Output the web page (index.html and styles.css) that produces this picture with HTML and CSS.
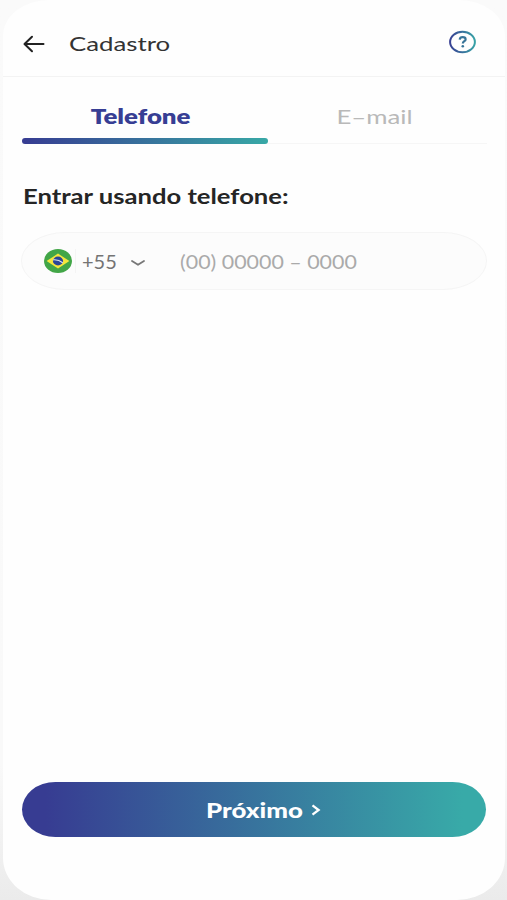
FILE: index.html
```html
<!DOCTYPE html>
<html lang="pt-BR">
<head>
    <meta charset="UTF-8">
    <meta name="viewport" content="width=device-width, initial-scale=1.0">
    <title>Cadastro</title>
    <link rel="stylesheet" href="styles.css">
</head>
<body>
    <div class="screen">
        <header class="header">
            <svg class="back-icon" width="22" height="18" viewBox="0 0 22 18" fill="none" stroke="#222" stroke-width="2" stroke-linecap="round" stroke-linejoin="round">
                <path d="M20.5 9H2M9 1.7L1.5 9L9 16.3"/>
            </svg>
            <h1 class="title"><span class="wide">Cadastro</span></h1>
            <svg class="help-icon" width="28" height="24" viewBox="0 0 28 24" fill="none">
                <defs>
                    <linearGradient id="helpGradient" x1="0" x2="28" y1="0" y2="0" gradientUnits="userSpaceOnUse">
                        <stop offset="0" stop-color="#373c92"/>
                        <stop offset="1" stop-color="#38aaa8"/>
                    </linearGradient>
                </defs>
                <ellipse cx="13.5" cy="12" rx="12.4" ry="10.2" stroke="url(#helpGradient)" stroke-width="2"/>
                <path d="M10.7 9.6C10.9 8 12 7.2 13.6 7.2C15.4 7.2 16.6 8 16.6 9.4C16.6 11.3 13.8 11.2 13.8 13.6" stroke="#377498" stroke-width="2.2"/>
                <circle cx="13.8" cy="16.3" r="1.3" fill="#377498"/>
            </svg>
        </header>

        <nav class="tabs">
            <div class="tab active"><span class="wide">Telefone</span></div>
            <div class="tab"><span class="wide">E–mail</span></div>
        </nav>

        <form class="form">
            <label class="label" for="phone"><span class="wide">Entrar usando telefone:</span></label>
            <div class="phone-field">
                <svg class="flag" width="28" height="24" viewBox="0 0 28 24">
                    <ellipse cx="14" cy="12" rx="14" ry="12" fill="#42a647"/>
                    <path d="M14 4.6L25.4 12L14 19.4L2.6 12Z" fill="#f5e63d"/>
                    <ellipse cx="14" cy="12" rx="5.1" ry="4.4" fill="#2b4597"/>
                    <path d="M9.2 10.8Q14.5 10.3 18.7 13.7" fill="none" stroke="#dce5ef" stroke-width="1.2"/>
                </svg>
                <span class="country-code">+55</span>
                <svg class="chevron-down" width="16" height="8" viewBox="0 0 16 8" fill="none" stroke="#777" stroke-width="1.8" stroke-linecap="round" stroke-linejoin="round">
                    <path d="M2 2L8 5.8L14 2"/>
                </svg>
                <input class="phone-input" type="tel" id="phone" placeholder="(00) 00000 – 0000">
            </div>
            <button class="next" type="button">
                <span class="wide">Próximo</span>
                <svg width="10" height="12" viewBox="0 0 10 12" fill="none" stroke="#fff" stroke-width="2.3">
                    <path d="M1.5 1.3L7.6 6L1.5 10.7"/>
                </svg>
            </button>
        </form>
    </div>
</body>
</html>
```

FILE: styles.css
```css
* {
    box-sizing: border-box;
}
body {
    margin: 0;
    padding: 0 2px 0 3px;
    height: 900px;
    overflow: hidden;
    font-family: Lato, sans-serif;
    font-size: 20px;
    background: linear-gradient(#fafafa, #f9f9f9 85%, #ebebeb);
}
.screen {
    display: flex;
    flex-direction: column;
    height: 900px;
    border-radius: 46px 46px 48px 48px / 36px 36px 42px 42px;
    background: #fefefe;
}
/* extended letterforms */
.wide {
    display: inline-block;
    transform: scaleX(1.29);
    white-space: nowrap;
}
.header {
    display: flex;
    height: 77px;
    padding: 0 28px 0 20px;
    border-bottom: 1px solid #f3f3f3;
}
.back-icon {
    margin-top: 35px;
}
.title {
    margin: 31px 0 0 24px;
    font-size: 20px;
    font-weight: 400;
    line-height: 24px;
    color: #333;
}
.title .wide,
.label .wide {
    transform-origin: left;
}
.help-icon {
    margin: 30px 0 0 auto;
}
.tabs {
    display: flex;
    margin: 0 18px 0 19px;
    height: 67px;
    border-bottom: 1px solid #f6f6f6;
}
.tab {
    flex: 1;
    padding: 27px 5px 0 0;
    height: 67px;
    text-align: center;
    line-height: 24px;
    color: #b9b9b9;
}
.tab.active {
    flex: 0 0 246px;
    display: flex;
    flex-direction: column;
    padding-right: 0;
    font-weight: 800;
    color: #373e94;
}
.tab.active .wide {
    padding-right: 7px;
}
.tab.active::after {
    content: "";
    width: 100%;
    height: 6px;
    margin-top: auto;
    border-radius: 3px;
    background: linear-gradient(90deg, #373c92, #38a8a6);
}
/* the block-level label inside the active tab scales around its own text */
.tab.active .wide {
    align-self: center;
}
.form {
    display: flex;
    flex: 1;
    flex-direction: column;
    padding: 0 18px 63px;
}
.label {
    margin: 40px 0 0 2px;
    font-weight: 700;
    line-height: 24px;
    color: #252525;
}
.label .wide {
    transform: scaleX(1.28);
}
.phone-field {
    display: flex;
    align-items: center;
    height: 58px;
    margin-top: 24px;
    padding-left: 22px;
    border: 1px solid #f5f5f5;
    border-radius: 44px / 29px;
    background: #fcfcfc;
}
.flag {
    margin-top: -1px;
}
.country-code {
    width: 55px;
    height: 24px;
    margin-left: 3px;
    padding-left: 6px;
    border-left: 1px solid #f4f4f4;
    line-height: 24px;
    color: #747474;
}
.chevron-down {
    margin-top: 3px;
}
.phone-input {
    width: 170px;
    margin-left: 34px;
    padding: 0;
    border: none;
    outline: none;
    background: none;
    font: inherit;
    transform: scaleX(1.07);
    transform-origin: left;
}
.phone-input::placeholder {
    color: #aaa;
    opacity: 1;
}
.next {
    display: flex;
    align-items: center;
    justify-content: center;
    gap: 18px;
    height: 55px;
    margin: auto 1px 0;
    padding: 1px 0 0 30px;
    border: none;
    border-radius: 34px / 28px;
    background: linear-gradient(90deg, #373c92 5%, #38aaa8 95%);
    font: 900 20px Lato, sans-serif;
    color: #fff;
}
```
